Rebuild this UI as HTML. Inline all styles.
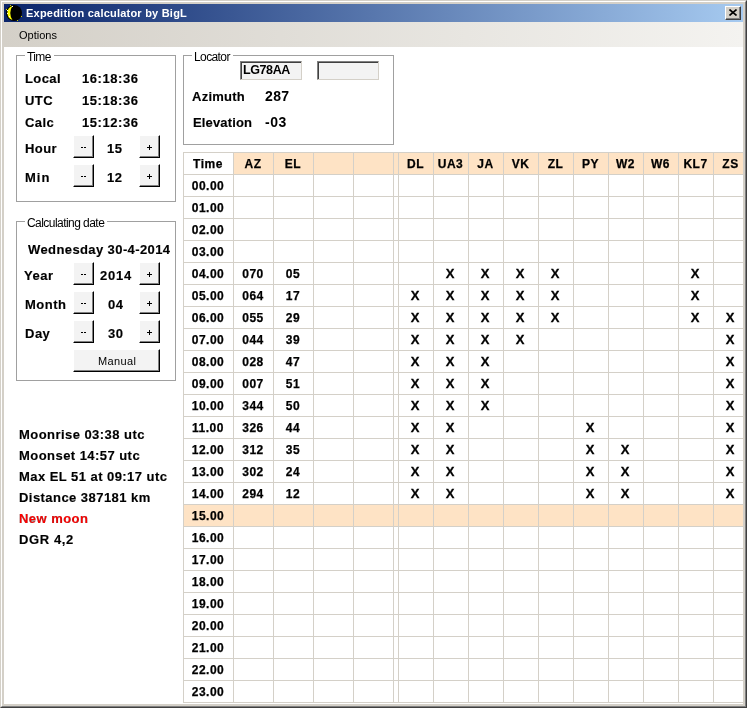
<!DOCTYPE html>
<html><head><meta charset="utf-8">
<style>
html,body{margin:0;padding:0;}
body{-webkit-font-smoothing:antialiased;width:747px;height:708px;position:relative;overflow:hidden;background:#d4d0c8;font-family:"Liberation Sans",sans-serif;color:#000;}
div{box-sizing:border-box;}
.a{position:absolute;white-space:nowrap;filter:grayscale(1);}
.c{position:absolute;height:21px;line-height:23px;text-align:center;font-weight:bold;font-size:12px;white-space:nowrap;letter-spacing:0.5px;padding-right:1px;filter:grayscale(1);-webkit-text-stroke:0.25px #000;}
.cx{font-size:13px;letter-spacing:0;line-height:21px;padding-right:2px;-webkit-text-stroke:0.3px #000;}
.b13{font-weight:bold;font-size:13px;-webkit-text-stroke:0.15px #000;}
.r11{font-size:11px;}
.btn{position:absolute;width:21px;height:23px;background:#f3f3f3;border-top:1px solid #fff;border-left:1px solid #fff;border-right:1px solid #000;border-bottom:1px solid #000;}
.btn::after{content:"";position:absolute;right:0;bottom:0;left:0;top:0;border-right:1px solid #808080;border-bottom:1px solid #808080;}
.mm::before{content:"";position:absolute;left:7px;top:11px;width:2px;height:1px;background:#000;box-shadow:3px 0 0 #000;}
.pp::before{content:"";position:absolute;left:7px;top:11px;width:5px;height:1px;background:#000;}
.pp>i{position:absolute;left:9px;top:9px;width:1px;height:5px;background:#000;}
.grp{position:absolute;border:1px solid #a0a0a0;}
.cap{position:absolute;filter:grayscale(1);background:#fff;padding:0 3px 0 2px;font-size:12px;line-height:13px;letter-spacing:-0.6px;}
</style></head><body>
<!-- window frame -->
<div style="position:absolute;left:0;top:0;width:747px;height:708px;border-top:1px solid #d4d0c8;border-left:1px solid #d4d0c8;border-right:1px solid #404040;border-bottom:1px solid #404040;"></div>
<div style="position:absolute;left:1px;top:1px;width:745px;height:706px;border-top:1px solid #fff;border-left:1px solid #fff;border-right:1px solid #808080;border-bottom:1px solid #808080;"></div>
<!-- title -->
<div style="position:absolute;left:4px;top:4px;width:739px;height:18px;background:linear-gradient(to right,#0a246a,#a6caf0);"></div>
<svg style="position:absolute;left:6px;top:5px" width="16" height="16" viewBox="0 0 16 16" shape-rendering="crispEdges">
<circle cx="8" cy="8" r="8" fill="#000" shape-rendering="auto"/>
<path d="M6.5 1 A7.35 7.35 0 0 0 6.5 15 A12 12 0 0 1 6.5 1 Z" fill="#ffff00" shape-rendering="auto"/>
<rect x="6" y="1" width="1" height="1" fill="#fff"/>
<rect x="1" y="5" width="1" height="1" fill="#fff"/>
<rect x="1" y="8" width="1" height="1" fill="#fff"/>
<rect x="3" y="11" width="1" height="1" fill="#fff"/>
<rect x="4" y="0" width="1" height="1" fill="#c8c800"/>
<rect x="0" y="4" width="1" height="1" fill="#c8c800"/>
<rect x="15" y="11" width="1" height="1" fill="#c8c800"/>
<rect x="11" y="15" width="1" height="1" fill="#c8c800"/>
</svg>
<div class="a" style="left:26px;top:5px;font-size:11px;font-weight:bold;color:#fff;line-height:16px;letter-spacing:0.22px;">Expedition calculator by BigL</div>
<div style="position:absolute;left:725px;top:6px;width:16px;height:14px;background:#d4d0c8;border-top:1px solid #fff;border-left:1px solid #fff;border-right:1px solid #404040;border-bottom:1px solid #404040;"></div>
<div style="position:absolute;left:726px;top:7px;width:14px;height:12px;border-right:1px solid #808080;border-bottom:1px solid #808080;"></div>
<svg style="position:absolute;left:729px;top:9px" width="8" height="7" viewBox="0 0 8 7"><path d="M0.5 0.5 L7.5 6.5 M7.5 0.5 L0.5 6.5" stroke="#000" stroke-width="1.6"/></svg>
<!-- menu -->
<div style="position:absolute;left:4px;top:22px;width:739px;height:25px;background:linear-gradient(to right,#d4d0c8,#f4f3f0);"></div>
<div class="a r11" style="left:19px;top:29px;line-height:13px;letter-spacing:0px;">Options</div>
<!-- content -->
<div style="position:absolute;left:4px;top:47px;width:739px;height:657px;background:#fff;"></div>

<!-- Time group -->
<div class="grp" style="left:16px;top:55px;width:160px;height:147px;"></div>
<div class="cap" style="left:25px;top:51px;">Time</div>
<div class="a b13" style="left:25px;top:71px;letter-spacing:0.4px">Local</div>
<div class="a b13" style="left:25px;top:93px;letter-spacing:0.4px">UTC</div>
<div class="a b13" style="left:25px;top:115px;letter-spacing:0.4px">Calc</div>
<div class="a b13" style="left:82px;top:71px;letter-spacing:0.55px">16:18:36</div>
<div class="a b13" style="left:82px;top:93px;letter-spacing:0.55px">15:18:36</div>
<div class="a b13" style="left:82px;top:115px;letter-spacing:0.55px">15:12:36</div>
<div class="a b13" style="left:25px;top:141px;letter-spacing:0.4px">Hour</div>
<div class="a b13" style="left:25px;top:170px;letter-spacing:1px">Min</div>
<div class="btn mm" style="left:73px;top:135px;"></div>
<div class="btn pp" style="left:139px;top:135px;"><i></i></div>
<div class="btn mm" style="left:73px;top:164px;"></div>
<div class="btn pp" style="left:139px;top:164px;"><i></i></div>
<div class="a b13" style="left:107px;top:141px;letter-spacing:0.6px">15</div>
<div class="a b13" style="left:107px;top:170px;letter-spacing:0.6px">12</div>

<!-- Calc date group -->
<div class="grp" style="left:16px;top:221px;width:160px;height:160px;"></div>
<div class="cap" style="left:25px;top:217px;letter-spacing:-0.55px">Calculating date</div>
<div class="a b13" style="left:28px;top:242px;letter-spacing:0.4px">Wednesday 30-4-2014</div>
<div class="a b13" style="left:24px;top:268px;letter-spacing:0.5px">Year</div>
<div class="a b13" style="left:25px;top:297px;letter-spacing:0.5px">Month</div>
<div class="a b13" style="left:25px;top:326px;letter-spacing:0.5px">Day</div>
<div class="btn mm" style="left:73px;top:262px;"></div>
<div class="btn pp" style="left:139px;top:262px;"><i></i></div>
<div class="btn mm" style="left:73px;top:291px;"></div>
<div class="btn pp" style="left:139px;top:291px;"><i></i></div>
<div class="btn mm" style="left:73px;top:320px;"></div>
<div class="btn pp" style="left:139px;top:320px;"><i></i></div>
<div class="a b13" style="left:100px;top:268px;letter-spacing:0.8px">2014</div>
<div class="a b13" style="left:108px;top:297px;letter-spacing:0.6px">04</div>
<div class="a b13" style="left:108px;top:326px;letter-spacing:0.6px">30</div>
<div class="btn" style="left:73px;top:349px;width:87px;"></div>
<div class="a r11" style="left:98px;top:355px;line-height:13px;letter-spacing:0.35px">Manual</div>

<!-- moon info -->
<div class="a b13" style="left:19px;top:427px;letter-spacing:0.45px">Moonrise 03:38 utc</div>
<div class="a b13" style="left:19px;top:448px;letter-spacing:0.45px">Moonset 14:57 utc</div>
<div class="a b13" style="left:19px;top:469px;letter-spacing:0.45px">Max EL 51 at 09:17 utc</div>
<div class="a b13" style="left:19px;top:490px;letter-spacing:0.45px">Distance 387181 km</div>
<div class="a b13" style="left:19px;top:511px;letter-spacing:0.45px;color:#f00;filter:none;will-change:transform">New moon</div>
<div class="a b13" style="left:19px;top:532px;letter-spacing:0.6px">DGR 4,2</div>

<!-- Locator group -->
<div class="grp" style="left:183px;top:55px;width:211px;height:90px;"></div>
<div class="cap" style="left:192px;top:51px;">Locator</div>
<div style="position:absolute;left:240px;top:61px;width:62px;height:19px;background:#f3f3f3;border-top:1px solid #808080;border-left:1px solid #808080;border-right:1px solid #d4d0c8;border-bottom:1px solid #d4d0c8;"></div>
<div style="position:absolute;left:241px;top:62px;width:60px;height:17px;border-top:1px solid #404040;border-left:1px solid #404040;"></div>
<div class="a" style="left:243px;top:63px;font-size:12.5px;font-weight:bold;line-height:15px;letter-spacing:-0.4px">LG78AA</div>
<div style="position:absolute;left:317px;top:61px;width:62px;height:19px;background:#f3f3f3;border-top:1px solid #808080;border-left:1px solid #808080;border-right:1px solid #d4d0c8;border-bottom:1px solid #d4d0c8;"></div>
<div style="position:absolute;left:318px;top:62px;width:60px;height:17px;border-top:1px solid #404040;border-left:1px solid #404040;"></div>
<div class="a b13" style="left:192px;top:89px;letter-spacing:0.25px">Azimuth</div>
<div class="a b13" style="left:193px;top:115px;letter-spacing:0.15px">Elevation</div>
<div class="a" style="left:265px;top:88px;font-size:14px;font-weight:bold;letter-spacing:0.4px">287</div>
<div class="a" style="left:265px;top:114px;font-size:14px;font-weight:bold;letter-spacing:0.5px">-03</div>

<!-- table -->
<div style="position:absolute;left:234px;top:153px;width:509px;height:21px;background:#fee3c5"></div>
<div style="position:absolute;left:184px;top:505px;width:559px;height:21px;background:#fee3c5"></div>
<div style="position:absolute;left:183px;top:152px;width:1px;height:551px;background:#d4d0c8"></div>
<div style="position:absolute;left:233px;top:152px;width:1px;height:551px;background:#d4d0c8"></div>
<div style="position:absolute;left:273px;top:152px;width:1px;height:551px;background:#d4d0c8"></div>
<div style="position:absolute;left:313px;top:152px;width:1px;height:551px;background:#d4d0c8"></div>
<div style="position:absolute;left:353px;top:152px;width:1px;height:551px;background:#d4d0c8"></div>
<div style="position:absolute;left:393px;top:152px;width:1px;height:551px;background:#d4d0c8"></div>
<div style="position:absolute;left:398px;top:152px;width:1px;height:551px;background:#d4d0c8"></div>
<div style="position:absolute;left:433px;top:152px;width:1px;height:551px;background:#d4d0c8"></div>
<div style="position:absolute;left:468px;top:152px;width:1px;height:551px;background:#d4d0c8"></div>
<div style="position:absolute;left:503px;top:152px;width:1px;height:551px;background:#d4d0c8"></div>
<div style="position:absolute;left:538px;top:152px;width:1px;height:551px;background:#d4d0c8"></div>
<div style="position:absolute;left:573px;top:152px;width:1px;height:551px;background:#d4d0c8"></div>
<div style="position:absolute;left:608px;top:152px;width:1px;height:551px;background:#d4d0c8"></div>
<div style="position:absolute;left:643px;top:152px;width:1px;height:551px;background:#d4d0c8"></div>
<div style="position:absolute;left:678px;top:152px;width:1px;height:551px;background:#d4d0c8"></div>
<div style="position:absolute;left:713px;top:152px;width:1px;height:551px;background:#d4d0c8"></div>
<div style="position:absolute;left:183px;top:152px;width:560px;height:1px;background:#d4d0c8"></div>
<div style="position:absolute;left:183px;top:174px;width:560px;height:1px;background:#d4d0c8"></div>
<div style="position:absolute;left:183px;top:196px;width:560px;height:1px;background:#d4d0c8"></div>
<div style="position:absolute;left:183px;top:218px;width:560px;height:1px;background:#d4d0c8"></div>
<div style="position:absolute;left:183px;top:240px;width:560px;height:1px;background:#d4d0c8"></div>
<div style="position:absolute;left:183px;top:262px;width:560px;height:1px;background:#d4d0c8"></div>
<div style="position:absolute;left:183px;top:284px;width:560px;height:1px;background:#d4d0c8"></div>
<div style="position:absolute;left:183px;top:306px;width:560px;height:1px;background:#d4d0c8"></div>
<div style="position:absolute;left:183px;top:328px;width:560px;height:1px;background:#d4d0c8"></div>
<div style="position:absolute;left:183px;top:350px;width:560px;height:1px;background:#d4d0c8"></div>
<div style="position:absolute;left:183px;top:372px;width:560px;height:1px;background:#d4d0c8"></div>
<div style="position:absolute;left:183px;top:394px;width:560px;height:1px;background:#d4d0c8"></div>
<div style="position:absolute;left:183px;top:416px;width:560px;height:1px;background:#d4d0c8"></div>
<div style="position:absolute;left:183px;top:438px;width:560px;height:1px;background:#d4d0c8"></div>
<div style="position:absolute;left:183px;top:460px;width:560px;height:1px;background:#d4d0c8"></div>
<div style="position:absolute;left:183px;top:482px;width:560px;height:1px;background:#d4d0c8"></div>
<div style="position:absolute;left:183px;top:504px;width:560px;height:1px;background:#d4d0c8"></div>
<div style="position:absolute;left:183px;top:526px;width:560px;height:1px;background:#d4d0c8"></div>
<div style="position:absolute;left:183px;top:548px;width:560px;height:1px;background:#d4d0c8"></div>
<div style="position:absolute;left:183px;top:570px;width:560px;height:1px;background:#d4d0c8"></div>
<div style="position:absolute;left:183px;top:592px;width:560px;height:1px;background:#d4d0c8"></div>
<div style="position:absolute;left:183px;top:614px;width:560px;height:1px;background:#d4d0c8"></div>
<div style="position:absolute;left:183px;top:636px;width:560px;height:1px;background:#d4d0c8"></div>
<div style="position:absolute;left:183px;top:658px;width:560px;height:1px;background:#d4d0c8"></div>
<div style="position:absolute;left:183px;top:680px;width:560px;height:1px;background:#d4d0c8"></div>
<div style="position:absolute;left:183px;top:702px;width:560px;height:1px;background:#d4d0c8"></div>
<div class="c" style="left:184px;top:153px;width:49px">Time</div>
<div class="c" style="left:234px;top:153px;width:39px">AZ</div>
<div class="c" style="left:274px;top:153px;width:39px">EL</div>
<div class="c" style="left:399px;top:153px;width:34px">DL</div>
<div class="c" style="left:434px;top:153px;width:34px">UA3</div>
<div class="c" style="left:469px;top:153px;width:34px">JA</div>
<div class="c" style="left:504px;top:153px;width:34px">VK</div>
<div class="c" style="left:539px;top:153px;width:34px">ZL</div>
<div class="c" style="left:574px;top:153px;width:34px">PY</div>
<div class="c" style="left:609px;top:153px;width:34px">W2</div>
<div class="c" style="left:644px;top:153px;width:34px">W6</div>
<div class="c" style="left:679px;top:153px;width:34px">KL7</div>
<div class="c" style="left:714px;top:153px;width:34px">ZS</div>
<div class="c" style="left:184px;top:175px;width:49px">00.00</div>
<div class="c" style="left:184px;top:197px;width:49px">01.00</div>
<div class="c" style="left:184px;top:219px;width:49px">02.00</div>
<div class="c" style="left:184px;top:241px;width:49px">03.00</div>
<div class="c" style="left:184px;top:263px;width:49px">04.00</div>
<div class="c" style="left:234px;top:263px;width:39px">070</div>
<div class="c" style="left:274px;top:263px;width:39px">05</div>
<div class="c cx" style="left:434px;top:263px;width:34px">X</div>
<div class="c cx" style="left:469px;top:263px;width:34px">X</div>
<div class="c cx" style="left:504px;top:263px;width:34px">X</div>
<div class="c cx" style="left:539px;top:263px;width:34px">X</div>
<div class="c cx" style="left:679px;top:263px;width:34px">X</div>
<div class="c" style="left:184px;top:285px;width:49px">05.00</div>
<div class="c" style="left:234px;top:285px;width:39px">064</div>
<div class="c" style="left:274px;top:285px;width:39px">17</div>
<div class="c cx" style="left:399px;top:285px;width:34px">X</div>
<div class="c cx" style="left:434px;top:285px;width:34px">X</div>
<div class="c cx" style="left:469px;top:285px;width:34px">X</div>
<div class="c cx" style="left:504px;top:285px;width:34px">X</div>
<div class="c cx" style="left:539px;top:285px;width:34px">X</div>
<div class="c cx" style="left:679px;top:285px;width:34px">X</div>
<div class="c" style="left:184px;top:307px;width:49px">06.00</div>
<div class="c" style="left:234px;top:307px;width:39px">055</div>
<div class="c" style="left:274px;top:307px;width:39px">29</div>
<div class="c cx" style="left:399px;top:307px;width:34px">X</div>
<div class="c cx" style="left:434px;top:307px;width:34px">X</div>
<div class="c cx" style="left:469px;top:307px;width:34px">X</div>
<div class="c cx" style="left:504px;top:307px;width:34px">X</div>
<div class="c cx" style="left:539px;top:307px;width:34px">X</div>
<div class="c cx" style="left:679px;top:307px;width:34px">X</div>
<div class="c cx" style="left:714px;top:307px;width:34px">X</div>
<div class="c" style="left:184px;top:329px;width:49px">07.00</div>
<div class="c" style="left:234px;top:329px;width:39px">044</div>
<div class="c" style="left:274px;top:329px;width:39px">39</div>
<div class="c cx" style="left:399px;top:329px;width:34px">X</div>
<div class="c cx" style="left:434px;top:329px;width:34px">X</div>
<div class="c cx" style="left:469px;top:329px;width:34px">X</div>
<div class="c cx" style="left:504px;top:329px;width:34px">X</div>
<div class="c cx" style="left:714px;top:329px;width:34px">X</div>
<div class="c" style="left:184px;top:351px;width:49px">08.00</div>
<div class="c" style="left:234px;top:351px;width:39px">028</div>
<div class="c" style="left:274px;top:351px;width:39px">47</div>
<div class="c cx" style="left:399px;top:351px;width:34px">X</div>
<div class="c cx" style="left:434px;top:351px;width:34px">X</div>
<div class="c cx" style="left:469px;top:351px;width:34px">X</div>
<div class="c cx" style="left:714px;top:351px;width:34px">X</div>
<div class="c" style="left:184px;top:373px;width:49px">09.00</div>
<div class="c" style="left:234px;top:373px;width:39px">007</div>
<div class="c" style="left:274px;top:373px;width:39px">51</div>
<div class="c cx" style="left:399px;top:373px;width:34px">X</div>
<div class="c cx" style="left:434px;top:373px;width:34px">X</div>
<div class="c cx" style="left:469px;top:373px;width:34px">X</div>
<div class="c cx" style="left:714px;top:373px;width:34px">X</div>
<div class="c" style="left:184px;top:395px;width:49px">10.00</div>
<div class="c" style="left:234px;top:395px;width:39px">344</div>
<div class="c" style="left:274px;top:395px;width:39px">50</div>
<div class="c cx" style="left:399px;top:395px;width:34px">X</div>
<div class="c cx" style="left:434px;top:395px;width:34px">X</div>
<div class="c cx" style="left:469px;top:395px;width:34px">X</div>
<div class="c cx" style="left:714px;top:395px;width:34px">X</div>
<div class="c" style="left:184px;top:417px;width:49px">11.00</div>
<div class="c" style="left:234px;top:417px;width:39px">326</div>
<div class="c" style="left:274px;top:417px;width:39px">44</div>
<div class="c cx" style="left:399px;top:417px;width:34px">X</div>
<div class="c cx" style="left:434px;top:417px;width:34px">X</div>
<div class="c cx" style="left:574px;top:417px;width:34px">X</div>
<div class="c cx" style="left:714px;top:417px;width:34px">X</div>
<div class="c" style="left:184px;top:439px;width:49px">12.00</div>
<div class="c" style="left:234px;top:439px;width:39px">312</div>
<div class="c" style="left:274px;top:439px;width:39px">35</div>
<div class="c cx" style="left:399px;top:439px;width:34px">X</div>
<div class="c cx" style="left:434px;top:439px;width:34px">X</div>
<div class="c cx" style="left:574px;top:439px;width:34px">X</div>
<div class="c cx" style="left:609px;top:439px;width:34px">X</div>
<div class="c cx" style="left:714px;top:439px;width:34px">X</div>
<div class="c" style="left:184px;top:461px;width:49px">13.00</div>
<div class="c" style="left:234px;top:461px;width:39px">302</div>
<div class="c" style="left:274px;top:461px;width:39px">24</div>
<div class="c cx" style="left:399px;top:461px;width:34px">X</div>
<div class="c cx" style="left:434px;top:461px;width:34px">X</div>
<div class="c cx" style="left:574px;top:461px;width:34px">X</div>
<div class="c cx" style="left:609px;top:461px;width:34px">X</div>
<div class="c cx" style="left:714px;top:461px;width:34px">X</div>
<div class="c" style="left:184px;top:483px;width:49px">14.00</div>
<div class="c" style="left:234px;top:483px;width:39px">294</div>
<div class="c" style="left:274px;top:483px;width:39px">12</div>
<div class="c cx" style="left:399px;top:483px;width:34px">X</div>
<div class="c cx" style="left:434px;top:483px;width:34px">X</div>
<div class="c cx" style="left:574px;top:483px;width:34px">X</div>
<div class="c cx" style="left:609px;top:483px;width:34px">X</div>
<div class="c cx" style="left:714px;top:483px;width:34px">X</div>
<div class="c" style="left:184px;top:505px;width:49px">15.00</div>
<div class="c" style="left:184px;top:527px;width:49px">16.00</div>
<div class="c" style="left:184px;top:549px;width:49px">17.00</div>
<div class="c" style="left:184px;top:571px;width:49px">18.00</div>
<div class="c" style="left:184px;top:593px;width:49px">19.00</div>
<div class="c" style="left:184px;top:615px;width:49px">20.00</div>
<div class="c" style="left:184px;top:637px;width:49px">21.00</div>
<div class="c" style="left:184px;top:659px;width:49px">22.00</div>
<div class="c" style="left:184px;top:681px;width:49px">23.00</div>
</body></html>
